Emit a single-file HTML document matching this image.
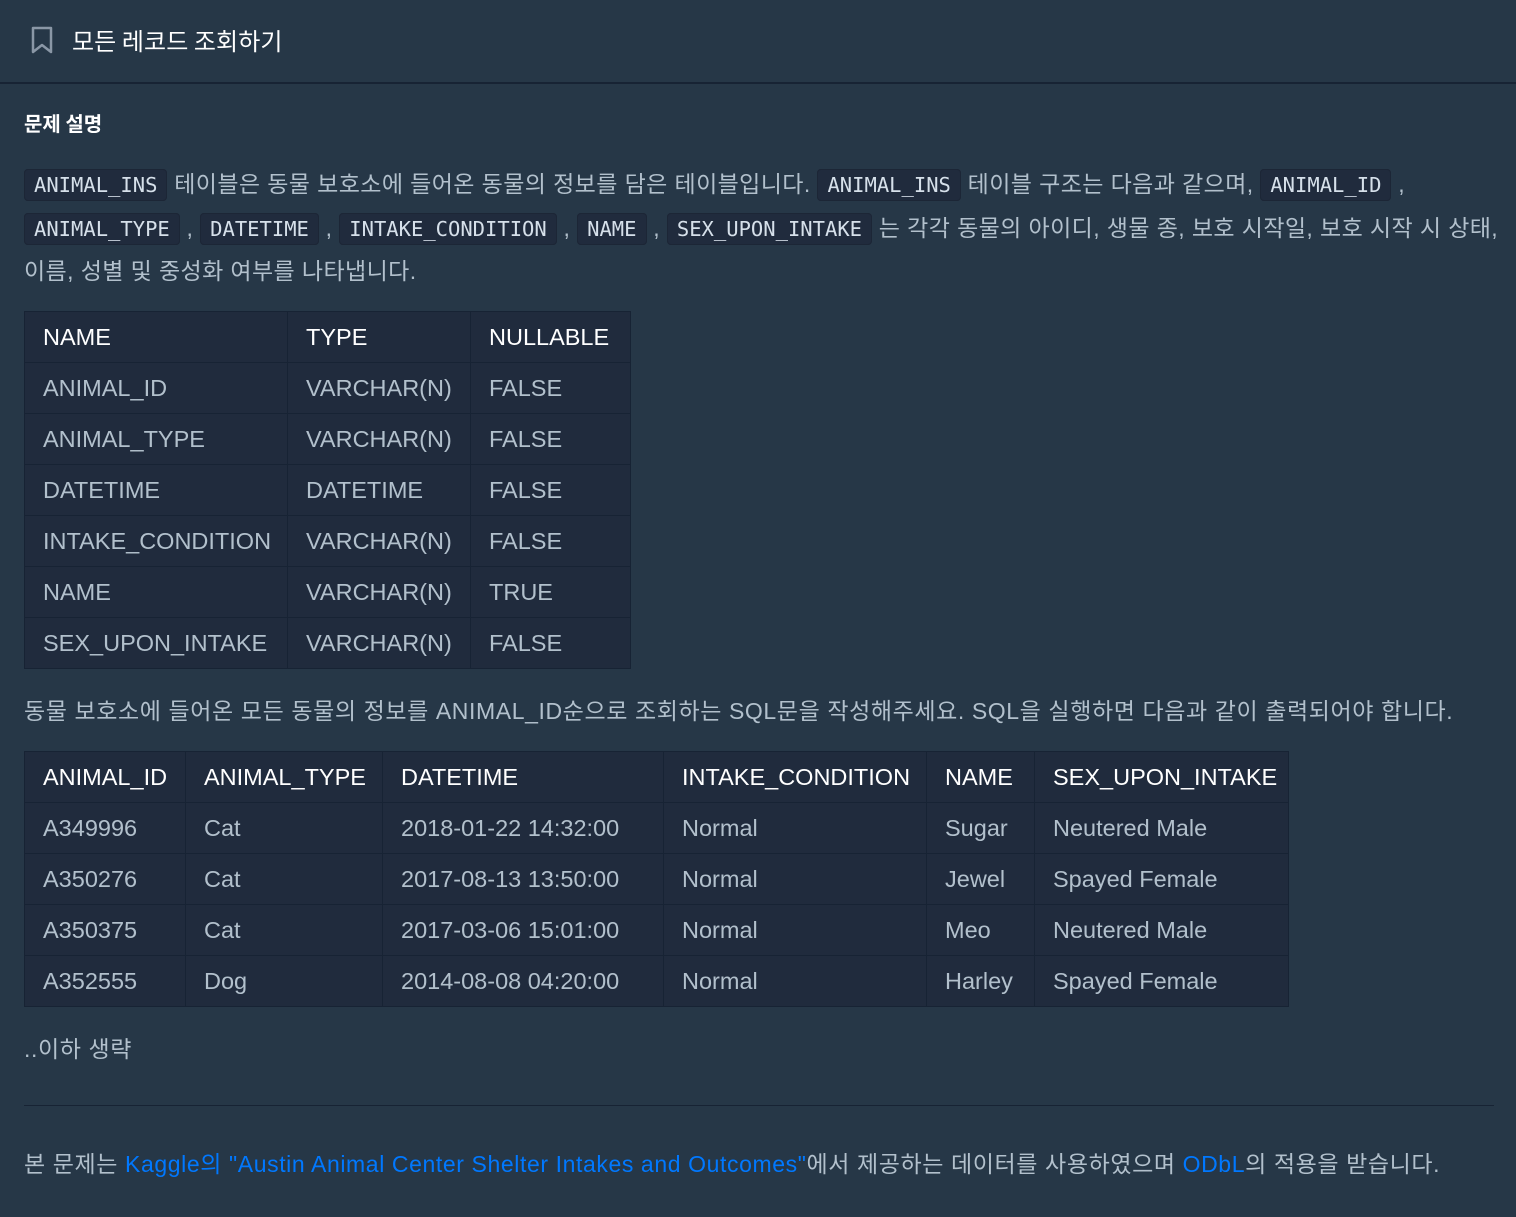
<!DOCTYPE html>
<html><head><meta charset="utf-8"><style>
body{margin:0;background:#263747;width:1516px;height:1217px;overflow:hidden;font-family:"Liberation Sans","Noto Sans CJK KR",sans-serif;color:#b2c0cc;}
.hdr{height:82px;border-bottom:2px solid #172334;}
.hdr svg{position:absolute;left:30px;top:26px}
.hdr span{position:absolute;left:72px;top:22px;font-size:24px;color:#fff;font-family:"Noto Sans CJK KR",sans-serif;letter-spacing:0.1px}
h3{margin:0;position:absolute;left:24px;top:108px;font-size:20px;color:#fff;font-family:"Noto Sans CJK KR",sans-serif;font-weight:700}
p.d{position:absolute;left:24px;top:163px;width:1490px;margin:0;font-size:23px;line-height:42.5px;font-family:"Liberation Sans","Noto Sans CJK KR",sans-serif;letter-spacing:0.4px}
code{font-family:"DejaVu Sans Mono","Liberation Mono",monospace;font-size:20.5px;letter-spacing:0;background:#202b3d;border:1px solid #1c2636;border-radius:4px;padding:3px 9px;color:#d6e0ea}
table{position:absolute;left:24px;border-collapse:collapse;table-layout:fixed;background:#202b3d;font-size:23.5px;font-family:"Liberation Sans",sans-serif}
td,th{border:1px solid #172334;height:50px;padding:0 0 0 18px;text-align:left;font-weight:400;white-space:nowrap;overflow:hidden}
th{color:#fff}
.t{position:absolute;left:24px;font-size:23px;font-family:"Liberation Sans","Noto Sans CJK KR",sans-serif;margin:0;letter-spacing:0.6px;white-space:nowrap}
a{color:#0078ff;text-decoration:none}
hr{position:absolute;left:24px;top:1105px;width:1470px;border:0;border-top:1px solid #172334;margin:0}
</style></head><body>
<div class="hdr"><svg width="24" height="28" viewBox="0 0 24 28"><path d="M3 2h18v24l-9-7-9 7z" fill="none" stroke="#8a97a6" stroke-width="2.5" stroke-linejoin="round"/></svg><span>모든 레코드 조회하기</span></div>
<h3>문제 설명</h3>
<p class="d"><code>ANIMAL_INS</code> 테이블은 동물 보호소에 들어온 동물의 정보를 담은 테이블입니다. <code>ANIMAL_INS</code> 테이블 구조는 다음과 같으며, <code>ANIMAL_ID</code> , <code>ANIMAL_TYPE</code> , <code>DATETIME</code> , <code>INTAKE_CONDITION</code> , <code>NAME</code> , <code>SEX_UPON_INTAKE</code> 는 각각 동물의 아이디, 생물 종, 보호 시작일, 보호 시작 시 상태, 이름, 성별 및 중성화 여부를 나타냅니다.</p>
<table style="top:311px;width:606px">
<colgroup><col style="width:263px"><col style="width:183px"><col style="width:160px"></colgroup>
<tr><th>NAME</th><th>TYPE</th><th>NULLABLE</th></tr>
<tr><td>ANIMAL_ID</td><td>VARCHAR(N)</td><td>FALSE</td></tr>
<tr><td>ANIMAL_TYPE</td><td>VARCHAR(N)</td><td>FALSE</td></tr>
<tr><td>DATETIME</td><td>DATETIME</td><td>FALSE</td></tr>
<tr><td>INTAKE_CONDITION</td><td>VARCHAR(N)</td><td>FALSE</td></tr>
<tr><td>NAME</td><td>VARCHAR(N)</td><td>TRUE</td></tr>
<tr><td>SEX_UPON_INTAKE</td><td>VARCHAR(N)</td><td>FALSE</td></tr>
</table>
<p class="t" style="top:692px">동물 보호소에 들어온 모든 동물의 정보를 ANIMAL_ID순으로 조회하는 SQL문을 작성해주세요. SQL을 실행하면 다음과 같이 출력되어야 합니다.</p>
<table style="top:751px;width:1264px">
<colgroup><col style="width:161px"><col style="width:197px"><col style="width:281px"><col style="width:263px"><col style="width:108px"><col style="width:254px"></colgroup>
<tr><th>ANIMAL_ID</th><th>ANIMAL_TYPE</th><th>DATETIME</th><th>INTAKE_CONDITION</th><th>NAME</th><th>SEX_UPON_INTAKE</th></tr>
<tr><td>A349996</td><td>Cat</td><td>2018-01-22 14:32:00</td><td>Normal</td><td>Sugar</td><td>Neutered Male</td></tr>
<tr><td>A350276</td><td>Cat</td><td>2017-08-13 13:50:00</td><td>Normal</td><td>Jewel</td><td>Spayed Female</td></tr>
<tr><td>A350375</td><td>Cat</td><td>2017-03-06 15:01:00</td><td>Normal</td><td>Meo</td><td>Neutered Male</td></tr>
<tr><td>A352555</td><td>Dog</td><td>2014-08-08 04:20:00</td><td>Normal</td><td>Harley</td><td>Spayed Female</td></tr>
</table>
<p class="t" style="top:1030px">..이하 생략</p>
<hr>
<p class="t" style="top:1145px">본 문제는 <a>Kaggle의 "Austin Animal Center Shelter Intakes and Outcomes"</a>에서 제공하는 데이터를 사용하였으며 <a>ODbL</a>의 적용을 받습니다.</p>
</body></html>
